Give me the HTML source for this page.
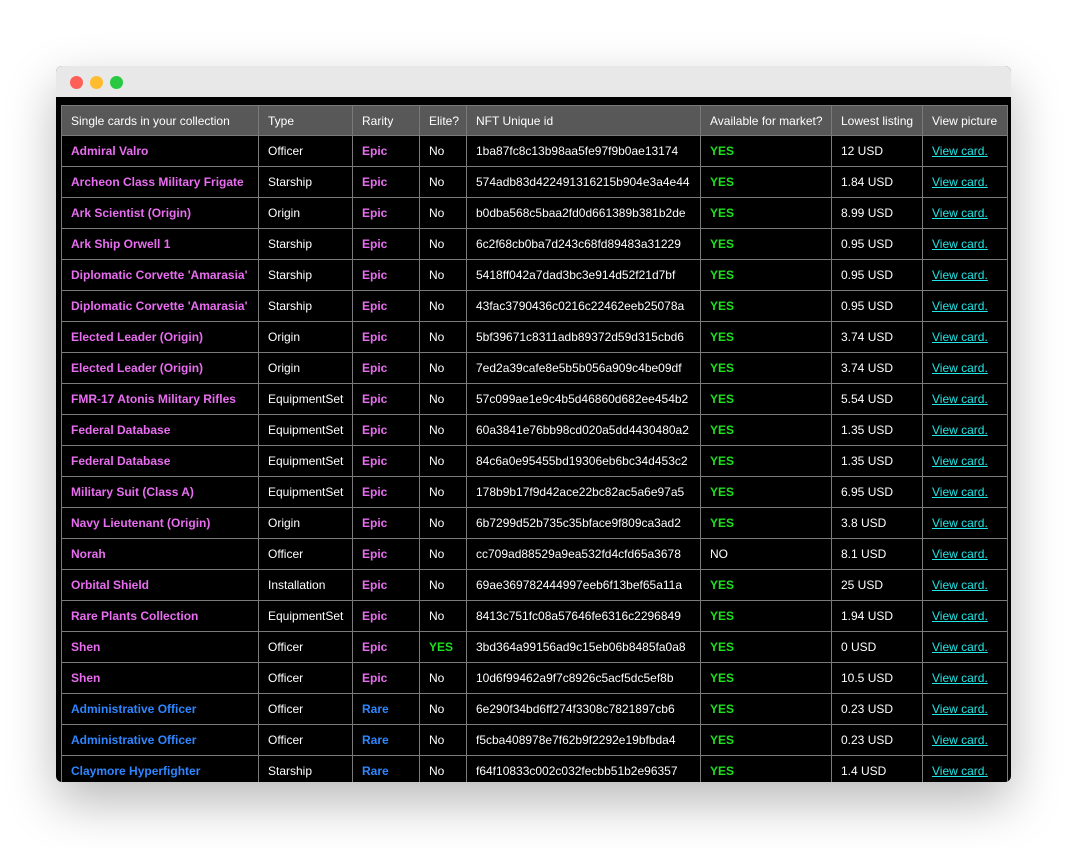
<!DOCTYPE html>
<html><head><meta charset="utf-8"><style>
body{margin:0;background:#fff;width:1067px;height:848px;overflow:hidden;font-family:"Liberation Sans",Arial,sans-serif}
.win{position:absolute;left:56px;top:66px;width:955px;height:716px;border-radius:6px;overflow:hidden;background:#000;box-shadow:0 20px 50px rgba(0,0,0,.28)}
.bar{height:31px;background:#e8e8e8;position:relative}
.dot{position:absolute;top:10px;width:13px;height:13px;border-radius:50%}
table{position:absolute;left:5px;top:39px;border-collapse:collapse;table-layout:fixed;width:946px;font-size:12px;color:#fff}
td,th{border:1px solid #7a7a7a;height:31px;padding:0 0 0 9px;text-align:left;white-space:nowrap;overflow:hidden;box-sizing:border-box}
th{background:#585858;font-weight:normal;height:30px}
.n{font-weight:bold;color:#e86df0}
.r{font-weight:bold;color:#2f86ff}
.y{font-weight:bold;color:#1ee01e}
a{color:#22e5e5;text-decoration:underline}
</style></head><body>
<div class="win"><div class="bar">
<div class="dot" style="left:14px;background:#fe5f57"></div>
<div class="dot" style="left:34px;background:#febc2e"></div>
<div class="dot" style="left:54px;background:#28c840"></div></div>
<table>
<colgroup><col style="width:197px"><col style="width:94px"><col style="width:67px"><col style="width:47px"><col style="width:234px"><col style="width:131px"><col style="width:91px"><col style="width:85px"></colgroup>
<tr><th>Single cards in your collection</th><th>Type</th><th>Rarity</th><th>Elite?</th><th>NFT Unique id</th><th>Available for market?</th><th>Lowest listing</th><th>View picture</th></tr>
<tr><td class="n">Admiral Valro</td><td>Officer</td><td class="n">Epic</td><td>No</td><td>1ba87fc8c13b98aa5fe97f9b0ae13174</td><td class="y">YES</td><td>12 USD</td><td><a>View card.</a></td></tr>
<tr><td class="n">Archeon Class Military Frigate</td><td>Starship</td><td class="n">Epic</td><td>No</td><td>574adb83d422491316215b904e3a4e44</td><td class="y">YES</td><td>1.84 USD</td><td><a>View card.</a></td></tr>
<tr><td class="n">Ark Scientist (Origin)</td><td>Origin</td><td class="n">Epic</td><td>No</td><td>b0dba568c5baa2fd0d661389b381b2de</td><td class="y">YES</td><td>8.99 USD</td><td><a>View card.</a></td></tr>
<tr><td class="n">Ark Ship Orwell 1</td><td>Starship</td><td class="n">Epic</td><td>No</td><td>6c2f68cb0ba7d243c68fd89483a31229</td><td class="y">YES</td><td>0.95 USD</td><td><a>View card.</a></td></tr>
<tr><td class="n">Diplomatic Corvette 'Amarasia'</td><td>Starship</td><td class="n">Epic</td><td>No</td><td>5418ff042a7dad3bc3e914d52f21d7bf</td><td class="y">YES</td><td>0.95 USD</td><td><a>View card.</a></td></tr>
<tr><td class="n">Diplomatic Corvette 'Amarasia'</td><td>Starship</td><td class="n">Epic</td><td>No</td><td>43fac3790436c0216c22462eeb25078a</td><td class="y">YES</td><td>0.95 USD</td><td><a>View card.</a></td></tr>
<tr><td class="n">Elected Leader (Origin)</td><td>Origin</td><td class="n">Epic</td><td>No</td><td>5bf39671c8311adb89372d59d315cbd6</td><td class="y">YES</td><td>3.74 USD</td><td><a>View card.</a></td></tr>
<tr><td class="n">Elected Leader (Origin)</td><td>Origin</td><td class="n">Epic</td><td>No</td><td>7ed2a39cafe8e5b5b056a909c4be09df</td><td class="y">YES</td><td>3.74 USD</td><td><a>View card.</a></td></tr>
<tr><td class="n">FMR-17 Atonis Military Rifles</td><td>EquipmentSet</td><td class="n">Epic</td><td>No</td><td>57c099ae1e9c4b5d46860d682ee454b2</td><td class="y">YES</td><td>5.54 USD</td><td><a>View card.</a></td></tr>
<tr><td class="n">Federal Database</td><td>EquipmentSet</td><td class="n">Epic</td><td>No</td><td>60a3841e76bb98cd020a5dd4430480a2</td><td class="y">YES</td><td>1.35 USD</td><td><a>View card.</a></td></tr>
<tr><td class="n">Federal Database</td><td>EquipmentSet</td><td class="n">Epic</td><td>No</td><td>84c6a0e95455bd19306eb6bc34d453c2</td><td class="y">YES</td><td>1.35 USD</td><td><a>View card.</a></td></tr>
<tr><td class="n">Military Suit (Class A)</td><td>EquipmentSet</td><td class="n">Epic</td><td>No</td><td>178b9b17f9d42ace22bc82ac5a6e97a5</td><td class="y">YES</td><td>6.95 USD</td><td><a>View card.</a></td></tr>
<tr><td class="n">Navy Lieutenant (Origin)</td><td>Origin</td><td class="n">Epic</td><td>No</td><td>6b7299d52b735c35bface9f809ca3ad2</td><td class="y">YES</td><td>3.8 USD</td><td><a>View card.</a></td></tr>
<tr><td class="n">Norah</td><td>Officer</td><td class="n">Epic</td><td>No</td><td>cc709ad88529a9ea532fd4cfd65a3678</td><td>NO</td><td>8.1 USD</td><td><a>View card.</a></td></tr>
<tr><td class="n">Orbital Shield</td><td>Installation</td><td class="n">Epic</td><td>No</td><td>69ae369782444997eeb6f13bef65a11a</td><td class="y">YES</td><td>25 USD</td><td><a>View card.</a></td></tr>
<tr><td class="n">Rare Plants Collection</td><td>EquipmentSet</td><td class="n">Epic</td><td>No</td><td>8413c751fc08a57646fe6316c2296849</td><td class="y">YES</td><td>1.94 USD</td><td><a>View card.</a></td></tr>
<tr><td class="n">Shen</td><td>Officer</td><td class="n">Epic</td><td class="y">YES</td><td>3bd364a99156ad9c15eb06b8485fa0a8</td><td class="y">YES</td><td>0 USD</td><td><a>View card.</a></td></tr>
<tr><td class="n">Shen</td><td>Officer</td><td class="n">Epic</td><td>No</td><td>10d6f99462a9f7c8926c5acf5dc5ef8b</td><td class="y">YES</td><td>10.5 USD</td><td><a>View card.</a></td></tr>
<tr><td class="r">Administrative Officer</td><td>Officer</td><td class="r">Rare</td><td>No</td><td>6e290f34bd6ff274f3308c7821897cb6</td><td class="y">YES</td><td>0.23 USD</td><td><a>View card.</a></td></tr>
<tr><td class="r">Administrative Officer</td><td>Officer</td><td class="r">Rare</td><td>No</td><td>f5cba408978e7f62b9f2292e19bfbda4</td><td class="y">YES</td><td>0.23 USD</td><td><a>View card.</a></td></tr>
<tr><td class="r">Claymore Hyperfighter</td><td>Starship</td><td class="r">Rare</td><td>No</td><td>f64f10833c002c032fecbb51b2e96357</td><td class="y">YES</td><td>1.4 USD</td><td><a>View card.</a></td></tr>
</table></div>
</body></html>
